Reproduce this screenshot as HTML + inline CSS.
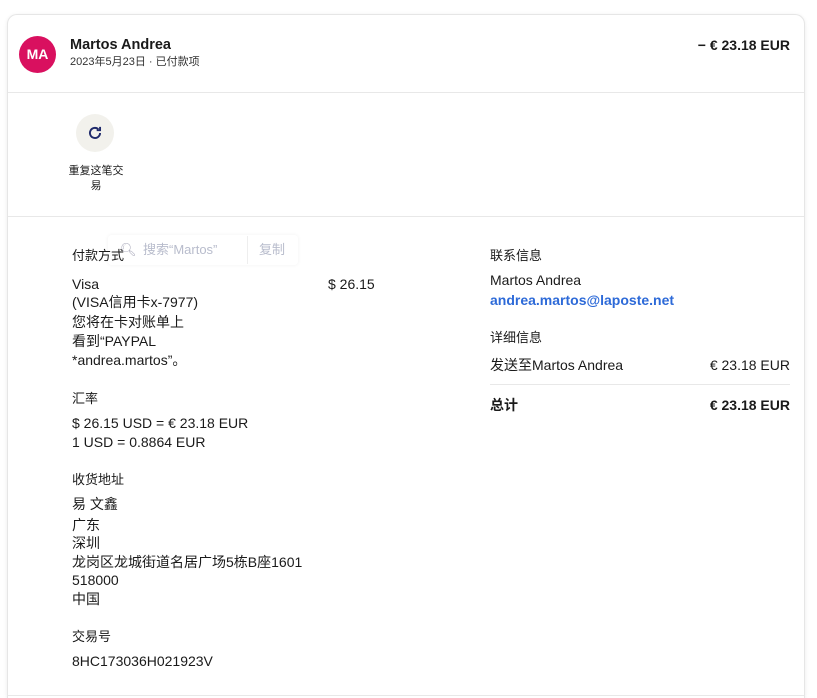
<!DOCTYPE html>
<html style="overflow:hidden;width:817px;height:698px"><head><meta charset="utf-8">
<style>
body{margin:0;width:817px;height:698px;background:#fff;font-family:"Liberation Sans","Noto Sans CJK SC",sans-serif;color:#1a1a1a;overflow:hidden;position:relative}
.card{position:absolute;left:7px;top:14px;width:796px;height:683px;border:1px solid #e6e6e6;border-bottom:none;border-radius:10px 10px 0 0;box-shadow:0 1px 4px rgba(0,0,0,.08);background:#fff}
.t{position:absolute;font-size:14px;line-height:20px;white-space:nowrap}
.s{font-size:13px}
.b{font-weight:bold}
.hr{position:absolute;height:1px;background:#e8e8e8}
</style></head><body>
<div class="card"></div>
<div style="position:absolute;left:19px;top:36px;width:37px;height:37px;border-radius:50%;background:#d9105f;color:#fff;font-size:14px;font-weight:bold;text-align:center;line-height:37px">MA</div>
<div class="t b" style="left:70px;top:35px;font-size:14.5px">Martos Andrea</div>
<div class="t" style="left:70px;top:52px;font-size:11px;color:#333">2023年5月23日 · 已付款项</div>
<div class="t b" style="right:27px;top:35px">− € 23.18 EUR</div>
<div class="hr" style="left:8px;width:796px;top:92px"></div>
<div style="position:absolute;left:76px;top:114px;width:38px;height:38px;border-radius:50%;background:#f2f1ec"></div>
<svg style="position:absolute;left:86px;top:124px" width="18" height="18" viewBox="0 0 16 16"><path d="M12.5 8a4.5 4.5 0 1 1-1.5-3.4" fill="none" stroke="#1f2a6b" stroke-width="1.7"/><path d="M12.5 2.5v3H9.5" fill="none" stroke="#1f2a6b" stroke-width="1.7"/></svg>
<div class="t" style="left:66px;top:164px;font-size:11px;line-height:15px;width:60px;text-align:center;white-space:normal">重复这笔交易</div>
<div class="hr" style="left:8px;width:796px;top:216px"></div>
<div style="position:absolute;left:108px;top:235px;width:190px;height:30px;border-radius:4px;box-shadow:0 0 4px rgba(0,0,0,.06);background:rgba(255,255,255,.9)"></div>
<div class="t" style="left:120px;top:240px;color:#aab;font-size:13px">🔍︎</div>
<div class="t" style="left:143px;top:240px;color:#b8bccc;font-size:13px">搜索“Martos”</div>
<div style="position:absolute;left:247px;top:236px;width:1px;height:28px;background:#eee"></div>
<div class="t" style="left:259px;top:240px;color:#b8bccc;font-size:13px">复制</div>
<div class="t s" style="left:72px;top:246px">付款方式</div>
<div class="t" style="left:72px;top:274px">Visa</div>
<div class="t" style="left:328px;top:274px">$ 26.15</div>
<div class="t" style="left:72px;top:292px">(VISA信用卡x-7977)</div>
<div class="t" style="left:72px;top:312px">您将在卡对账单上</div>
<div class="t" style="left:72px;top:331px">看到“PAYPAL</div>
<div class="t" style="left:72px;top:350px">*andrea.martos”。</div>
<div class="t s" style="left:72px;top:389px">汇率</div>
<div class="t" style="left:72px;top:413px">$ 26.15 USD = € 23.18 EUR</div>
<div class="t" style="left:72px;top:432px">1 USD = 0.8864 EUR</div>
<div class="t s" style="left:72px;top:470px">收货地址</div>
<div class="t" style="left:72px;top:494px">易 文鑫</div>
<div class="t" style="left:72px;top:515px">广东</div>
<div class="t" style="left:72px;top:533px">深圳</div>
<div class="t" style="left:72px;top:552px">龙岗区龙城街道名居广场5栋B座1601</div>
<div class="t" style="left:72px;top:570px">518000</div>
<div class="t" style="left:72px;top:589px">中国</div>
<div class="t s" style="left:72px;top:627px">交易号</div>
<div class="t" style="left:72px;top:651px">8HC173036H021923V</div>
<div class="hr" style="left:8px;width:796px;top:695px"></div>
<div class="t s" style="left:490px;top:246px">联系信息</div>
<div class="t" style="left:490px;top:270px">Martos Andrea</div>
<div class="t b" style="left:490px;top:290px;color:#2d6ad8">andrea.martos@laposte.net</div>
<div class="t s" style="left:490px;top:328px">详细信息</div>
<div class="t" style="left:490px;top:355px">发送至Martos Andrea</div>
<div class="t" style="right:27px;top:355px">€ 23.18 EUR</div>
<div class="hr" style="left:490px;width:300px;top:384px"></div>
<div class="t b" style="left:490px;top:395px">总计</div>
<div class="t b" style="right:27px;top:395px">€ 23.18 EUR</div>
</body></html>
